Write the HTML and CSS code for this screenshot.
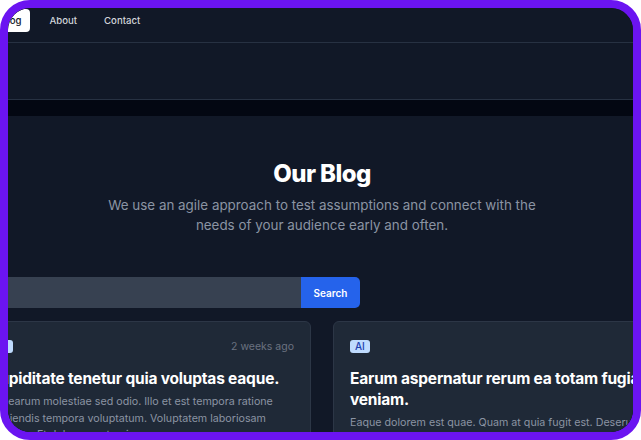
FILE: index.html
```html
<!DOCTYPE html>
<html lang="en">
<head>
<meta charset="utf-8">
<title>Our Blog</title>
<link rel="stylesheet" href="styles.css">
</head>
<body>
<div class="frame">
  <div class="viewport">
    <div class="page">
      <nav class="nav">
        <a class="nav-link active" href="#">Blog</a>
        <a class="nav-link" href="#">About</a>
        <a class="nav-link" href="#">Contact</a>
      </nav>
      <div class="subbar"></div>
      <div class="band"></div>
      <section class="hero">
        <h1 class="hero-title">Our Blog</h1>
        <p class="hero-text">We use an agile approach to test assumptions and connect with the needs of your audience early and often.</p>
        <form class="search">
          <input class="search-input" type="text" aria-label="Search">
          <button class="search-btn" type="button">Search</button>
        </form>
        <div class="cards">
          <article class="card">
            <div class="card-meta">
              <span class="tag">ML</span>
              <span class="date">2 weeks ago</span>
            </div>
            <h2 class="card-title">Cupiditate tenetur quia voluptas eaque.</h2>
            <p class="card-text">Aut earum molestiae sed odio. Illo et est tempora ratione Reiciendis tempora voluptatum. Voluptatem laboriosam voluptas. Et dolorem aut quia.</p>
          </article>
          <article class="card">
            <div class="card-meta">
              <span class="tag">AI</span>
            </div>
            <h2 class="card-title">Earum aspernatur rerum ea totam fugiat veniam.</h2>
            <p class="card-text">Eaque dolorem est quae. Quam at quia fugit est. Deserunt et ut quis sed.</p>
          </article>
        </div>
      </section>
    </div>
  </div>
</div>
</body>
</html>
```

FILE: styles.css
```css
* { box-sizing: border-box; }
html, body { margin: 0; padding: 0; }
body {
  background: #ffffff;
  font-family: Inter, "Noto Sans", sans-serif;
  width: 641px;
  height: 440px;
  overflow: hidden;
}
.frame {
  width: 641px;
  height: 440px;
  border: 8px solid #6b14f1;
  border-radius: 30px;
  overflow: hidden;
  background: #111827;
}
.viewport {
  width: 625px;
  height: 424px;
  overflow: hidden;
  border-radius: 22px;
}
.page {
  width: 702px;
  margin-left: -37px;
  background: #111827;
}
.nav {
  display: flex;
  align-items: flex-start;
  gap: 11px;
  height: 35px;
  padding: 1px 0 0 21px;
  border-bottom: 1px solid #273142;
}
.nav-link {
  font-size: 9.6px;
  font-weight: 500;
  color: #d1d5db;
  text-decoration: none;
  padding: 0 8px;
  height: 23px;
  line-height: 24px;
  border-radius: 4px;
}
.nav-link.active {
  background: #ffffff;
  color: #111827;
  padding: 0 9px;
}
.subbar {
  height: 57px;
  border-bottom: 1px solid #273142;
}
.band {
  height: 16px;
  background: #030712;
}
.hero {
  padding-top: 44px;
}
.hero-title {
  margin: 0;
  text-align: center;
  font-size: 24px;
  line-height: 28px;
  font-weight: 800;
  letter-spacing: -0.6px;
  color: #ffffff;
}
.hero-text {
  margin: 7px auto 0;
  width: 440px;
  text-align: center;
  font-size: 13.4px;
  line-height: 20px;
  font-weight: 400;
  color: #8b94a3;
}
.search {
  display: flex;
  width: 389px;
  height: 31px;
  margin-top: 42px;
}
.search-input {
  flex: 1;
  border: 0;
  background: #374151;
  border-radius: 5px 0 0 5px;
}
.search-btn {
  width: 59px;
  border: 0;
  background: #2563eb;
  color: #ffffff;
  font-family: inherit;
  font-size: 10px;
  font-weight: 600;
  border-radius: 0 5px 5px 0;
}
.cards {
  display: grid;
  grid-template-columns: 340px 340px;
  gap: 22px;
  margin-top: 13px;
}
.card {
  background: #1f2937;
  border: 1px solid #2c3646;
  border-radius: 6px;
  padding: 18px 16px 20px;
}
.card-meta {
  display: flex;
  justify-content: space-between;
  align-items: center;
  height: 13px;
}
.tag {
  font-size: 10px;
  line-height: 13px;
  padding: 0 5px;
  border-radius: 3px;
  background: #bfdbfe;
  color: #1e40af;
  font-weight: 500;
}
.date {
  font-size: 10.5px;
  color: #6b7280;
}
.card-title {
  margin: 15px 0 0;
  font-size: 15.5px;
  line-height: 21px;
  font-weight: 700;
  letter-spacing: -0.2px;
  color: #ffffff;
}
.card-text {
  margin: 5px 0 0;
  font-size: 10.7px;
  line-height: 16.5px;
  font-weight: 400;
  color: #8b94a3;
}
```
